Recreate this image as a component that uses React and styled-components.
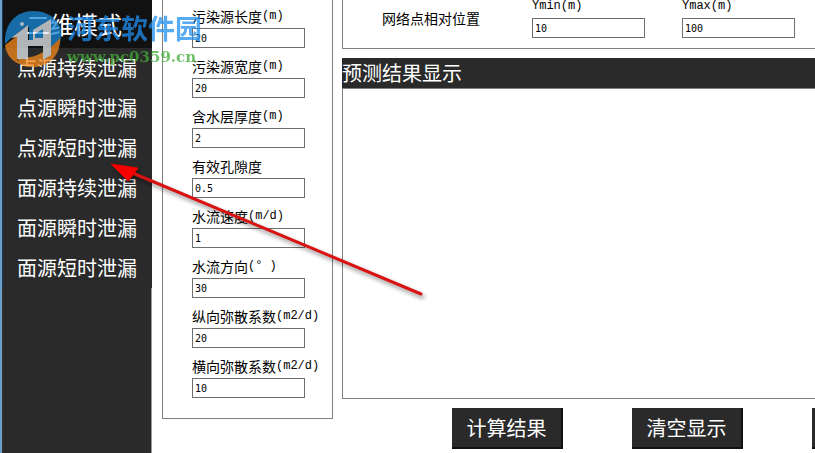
import React, { useState } from 'react'
import styled, { createGlobalStyle } from 'styled-components'

const menuItems = [
    '点源持续泄漏',
    '点源瞬时泄漏',
    '点源短时泄漏',
    '面源持续泄漏',
    '面源瞬时泄漏',
    '面源短时泄漏'
]

const params = [
    { id: 'length', name: '污染源长度', unit: '(m)', value: '20' },
    { id: 'width', name: '污染源宽度', unit: '(m)', value: '20' },
    { id: 'thickness', name: '含水层厚度', unit: '(m)', value: '2' },
    { id: 'porosity', name: '有效孔隙度', unit: '', value: '0.5' },
    { id: 'speed', name: '水流速度', unit: '(m/d)', value: '1' },
    { id: 'direction', name: '水流方向', unit: '(° )', value: '30' },
    { id: 'longitudinal', name: '纵向弥散系数', unit: '(m2/d)', value: '20' },
    { id: 'lateral', name: '横向弥散系数', unit: '(m2/d)', value: '10' }
]

const gridParams = [
    { id: 'ymin', name: '', unit: 'Ymin(m)', value: '10' },
    { id: 'ymax', name: '', unit: 'Ymax(m)', value: '100' }
]

const ParamField = ({ item }) => {
    const [value, setValue] = useState(item.value)
    return (
        <Field>
            <Label htmlFor={item.id}>{item.name}<Unit>{item.unit}</Unit></Label>
            <Input id={item.id} value={value} onChange={(e) => setValue(e.target.value)} />
        </Field>
    )
}

const App = () => {
    return (
        <Container>
            <GlobalStyle />
            <Sidebar>
                <SidebarTitle>二维模式</SidebarTitle>
                <Menu>
                    {menuItems.map((name) => (
                        <MenuButton key={name} type="button">{name}</MenuButton>
                    ))}
                </Menu>
                <SidebarRest />
            </Sidebar>
            <Main>
                <ParamPanel>
                    {params.map((item) => <ParamField key={item.id} item={item} />)}
                </ParamPanel>
                <Right>
                    <GridPanel>
                        <GridTitle>网络点相对位置</GridTitle>
                        {gridParams.map((item) => <ParamField key={item.id} item={item} />)}
                    </GridPanel>
                    <ResultTitle htmlFor="result">预测结果显示</ResultTitle>
                    <Result id="result" readOnly />
                    <Actions>
                        <ActionButton type="button">计算结果</ActionButton>
                        <ActionButton type="button">清空显示</ActionButton>
                        <ActionButton type="button" aria-label="更多" />
                    </Actions>
                </Right>
            </Main>
            <Watermark>
                <Logo viewBox="0 0 58 58">
                    <path d="M1 34C0 14 12 1 29 1c13 0 23 6 27 16 3 12-1 23-9 30V12L29 22v8h-4V17h-4L7 28z" fill="#1a8ad8" />
                    <path d="M1 35l12-9v24l6 5C9 53 2 45 1 35z" fill="#f58a1c" />
                    <path d="M19 56c-3-2-5-5-6-9 15 3 30-4 43-19 1 16-10 28-25 29-4 0-9 0-12-1z" fill="#f58a1c" />
                    <path d="M7 28L24 15v15h5V20L47 9v36l-8 5V36H24v13h-11V27z" fill="#e8ecef" />
                    <path d="M31 24l8-5v9h-8z" fill="#1a8ad8" />
                    <circle cx="18" cy="14" r="2" fill="#dcebf5" />
                </Logo>
                <WatermarkText>
                    <SiteName>河东软件园</SiteName>
                    <SiteUrl>www.pc0359.cn</SiteUrl>
                </WatermarkText>
            </Watermark>
            <Arrow viewBox="0 0 330 150" width="330" height="150">
                <line x1="29" y1="18" x2="315" y2="138" stroke="#d91212" strokeWidth="3" strokeLinecap="round" />
                <path d="M5 8L32 12L28 18L22 25z" fill="#f80000" stroke="#d00" strokeWidth="1" />
            </Arrow>
        </Container>
    )
}

const GlobalStyle = createGlobalStyle`
* {
    box-sizing: border-box;
}
body {
    margin: 0;
    background: #fff;
    overflow-x: hidden;
}
button, input, textarea {
    font-family: inherit;
}
`

const Container = styled.div`
position: relative;
display: flex;
min-height: 100vh;
overflow: hidden;
color: #000;
font-family: 'Noto Sans CJK SC', sans-serif;
`
const Sidebar = styled.nav`
flex: 0 0 152px;
display: flex;
flex-direction: column;
border-left: 2px solid #6f9fc8;
background: #2a2a2a;
`
const SidebarTitle = styled.h1`
margin: 0;
padding-left: 23px;
border-left: 1px solid #173a57;
background: #111;
color: #fff;
font-size: 24px;
font-weight: 400;
line-height: 48px;
`
const Menu = styled.div`
display: flex;
flex-direction: column;
border-left: 1px solid #173a57;
`
const MenuButton = styled.button`
height: 40px;
padding: 0 0 0 14px;
border: 0;
background: #2a2a2a;
color: #fff;
font-size: 20px;
line-height: 40px;
text-align: left;
cursor: pointer;
&:hover{
background: #3a3a3a;
}
`
const SidebarRest = styled.div`
flex: 1;
border-left: 1px solid #333;
border-right: 1px solid #999;
`
const Main = styled.main`
flex: 1;
min-width: 0;
display: flex;
align-items: flex-start;
gap: 9px;
padding-left: 10px;
`
const ParamPanel = styled.section`
flex: 0 0 171px;
display: flex;
flex-direction: column;
gap: 8px;
padding: 6px 0 20px 29px;
border: 1px solid #808080;
border-top: 0;
`
const Field = styled.div`
display: flex;
flex-direction: column;
gap: 2px;
`
const Label = styled.label`
display: flex;
align-items: center;
height: 20px;
font-size: 14px;
line-height: 20px;
white-space: nowrap;
`
const Unit = styled.span`
font-family: 'Liberation Mono', monospace;
font-size: 12px;
white-space: pre;
`
const Input = styled.input`
width: 113px;
height: 20px;
padding: 0 2px;
border: 1px solid #6e6e6e;
border-radius: 0;
background: #fff;
color: #000;
font-family: 'DejaVu Sans Mono', monospace;
font-size: 10px;
`
const Right = styled.div`
flex: 1;
min-width: 0;
display: flex;
flex-direction: column;
`
const GridPanel = styled.section`
display: flex;
align-items: flex-end;
gap: 37px;
height: 49px;
margin-bottom: 9px;
padding: 0 0 10px 39px;
border: 1px solid #808080;
border-width: 0 0 1px 1px;
`
const GridTitle = styled.span`
width: 113px;
margin-bottom: 10px;
font-size: 14px;
line-height: 20px;
`
const ResultTitle = styled.label`
background: #2a2a2a;
color: #fff;
font-size: 20px;
line-height: 30px;
`
const Result = styled.textarea`
display: block;
height: 311px;
border: 1px solid #808080;
border-right: 0;
border-radius: 0;
background: #fff;
font-size: 14px;
resize: none;
outline: 0;
`
const Actions = styled.div`
display: flex;
gap: 69px;
padding: 9px 0 4px 110px;
overflow: hidden;
`
const ActionButton = styled.button`
flex: 0 0 111px;
height: 41px;
padding: 0;
border: 1px solid #111;
border-width: 0 2px 2px 0;
background: #2a2a2a;
color: #fff;
font-size: 20px;
line-height: 38px;
cursor: pointer;
`
const Watermark = styled.div`
position: absolute;
top: 10px;
left: 4px;
display: flex;
gap: 5px;
opacity: 0.75;
pointer-events: none;
`
const Logo = styled.svg`
width: 58px;
height: 58px;
`
const WatermarkText = styled.div`
display: flex;
flex-direction: column;
`
const SiteName = styled.span`
color: #1f8ff0;
font-size: 27px;
font-weight: 700;
line-height: 36px;
`
const SiteUrl = styled.span`
color: #42ac38;
font-family: 'DejaVu Serif', serif;
font-size: 15px;
font-weight: 700;
line-height: 22px;
`
const Arrow = styled.svg`
position: absolute;
top: 156px;
left: 106px;
filter: drop-shadow(2px 3px 2px rgba(0, 0, 0, 0.45));
pointer-events: none;
`
export default App
